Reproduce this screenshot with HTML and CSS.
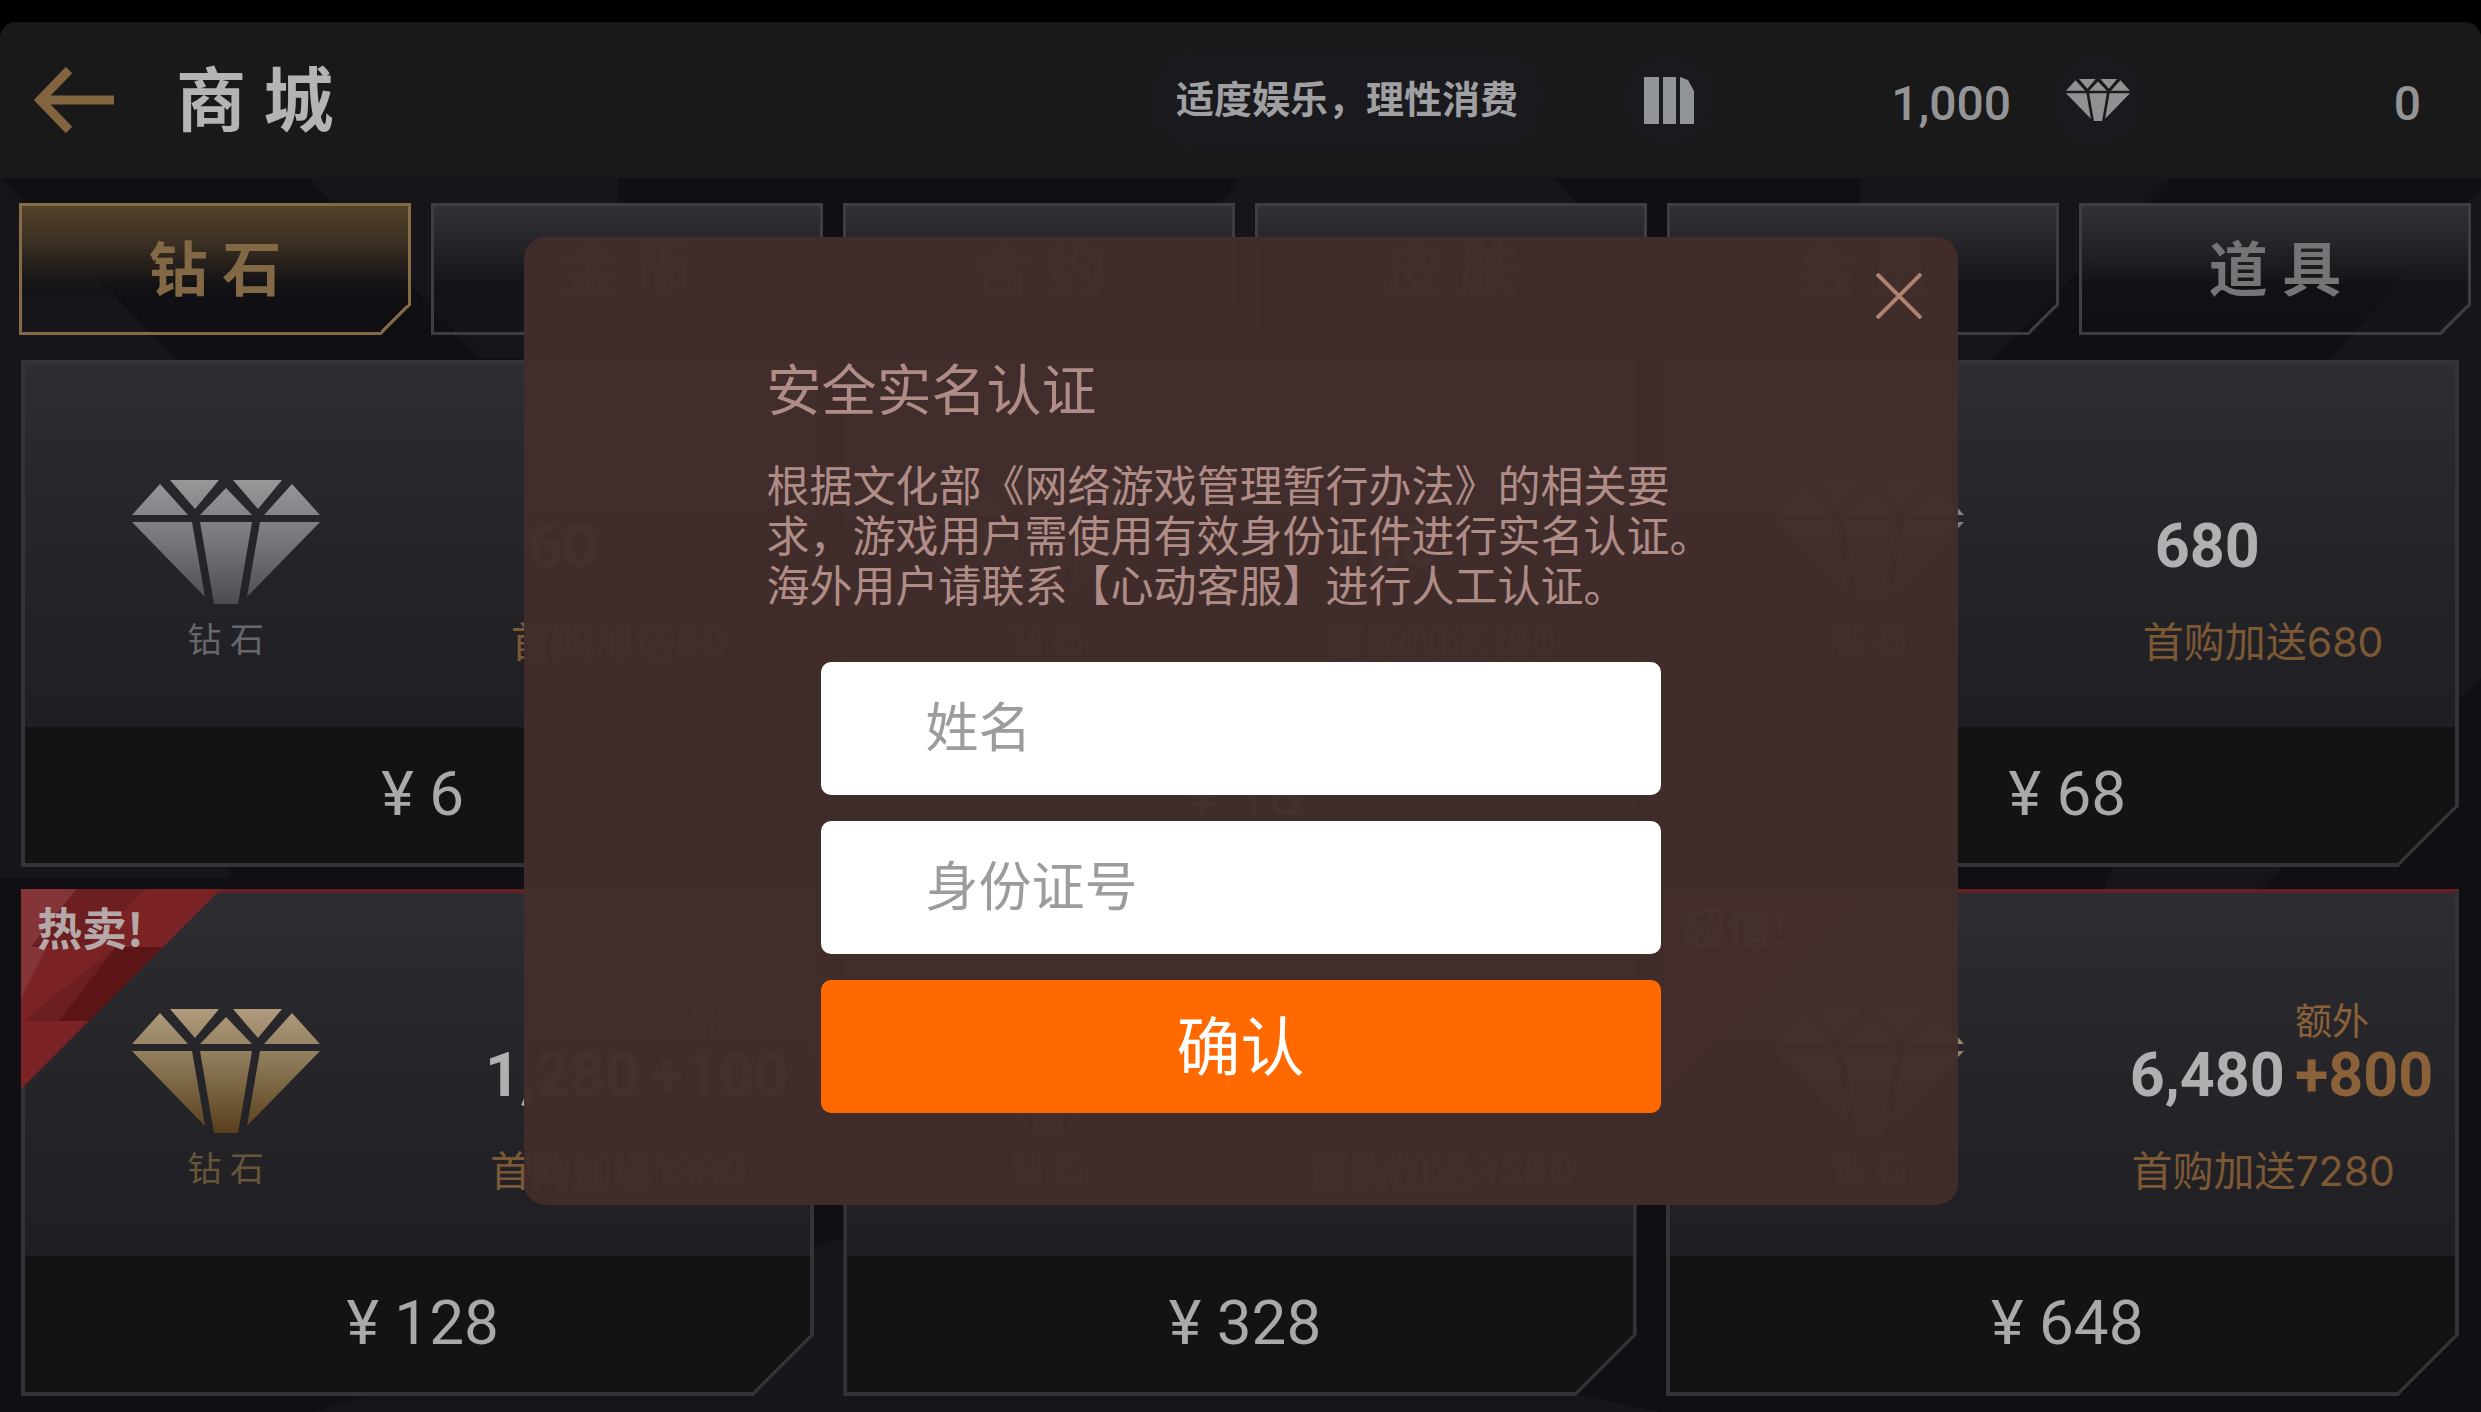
FILE: index.html
```html
<!DOCTYPE html>
<html lang="zh-CN">
<head>
<meta charset="utf-8">
<meta name="viewport" content="width=device-width, initial-scale=1">
<title>商城</title>
<link rel="stylesheet" href="styles.css">
</head>
<body>
<svg width="0" height="0" class="defs" aria-hidden="true">
  <defs>
    <linearGradient id="silver" x1="0" y1="0" x2="0" y2="124" gradientUnits="userSpaceOnUse"><stop offset="0" stop-color="#98989b"/><stop offset=".5" stop-color="#747679"/><stop offset="1" stop-color="#4c4c50"/></linearGradient>
    <linearGradient id="gold" x1="0" y1="0" x2="0" y2="124" gradientUnits="userSpaceOnUse"><stop offset="0" stop-color="#b09b7c"/><stop offset=".35" stop-color="#92805f"/><stop offset="1" stop-color="#5a3f1c"/></linearGradient>
    <symbol id="gem" viewBox="0 0 188 124">
      <path d="M28 4 56 35H0ZM38 0H87L63 29ZM101 0H150L126 29ZM94 8 120 35H68ZM160 4 188 35H132ZM0 42H60L73 117ZM68 42H120L106 124H82ZM128 42H188L115 117Z"/>
    </symbol>
  </defs>
</svg>
<div class="shop">
  <svg class="backdrop" viewBox="0 0 2481 1234" preserveAspectRatio="none" aria-hidden="true">
    <path d="M0 0 178 182 0 600ZM308 0H618V180L480 180ZM1240 0 1555 0 1590 40 1600 182H1100ZM1860 0H2170L1990 182H1860ZM2481 10V182H2330ZM0 182H170L230 700H0ZM2330 182H2481V500L2250 720H2100ZM315 1234 840 1060 1660 1234Z"/>
  </svg>
  <header class="topbar">
    <button class="back" type="button" aria-label="返回">
      <svg viewBox="0 0 80 66" width="80" height="66"><path d="M35 3 6 33 35 63M6 33H80" fill="none" stroke="#82643f" stroke-width="9"/></svg>
    </button>
    <h1>商 城</h1>
    <p class="notice">适度娱乐，理性消费</p>
    <span class="coin"><svg viewBox="0 0 50 47" width="50" height="47"><path d="M0 0H15V47H0ZM19 0H32V47H19ZM36 0 44 3 50 14V47H36Z" fill="#919499"/></svg></span>
    <span class="balance">1,000</span>
    <span class="coin"><svg width="64" height="44" fill="#919194"><use href="#gem"/></svg></span>
    <span class="balance last">0</span>
  </header>

  <nav class="tabs">
    <button class="tab active" type="button">钻 石</button>
    <button class="tab" type="button">金 币</button>
    <button class="tab" type="button">合 约</button>
    <button class="tab" type="button">皮 肤</button>
    <button class="tab" type="button">会 员</button>
    <button class="tab" type="button">道 具</button>
  </nav>

  <main class="goods">
    <article class="card">
      <div class="info">
        <div class="item"><svg class="gem" fill="url(#silver)"><use href="#gem"/></svg><span>钻 石</span></div>
        <strong class="amount">60</strong>
        <p class="bonus">首购加送60</p>
      </div>
      <div class="price">¥ 6</div>
    </article>
    <article class="card">
      <div class="info">
        <div class="item"><svg class="gem" fill="url(#silver)"><use href="#gem"/></svg><span>钻 石</span></div>
        <strong class="amount">180</strong>
        <p class="bonus">首购加送180</p>
      </div>
      <div class="price">¥ 18</div>
    </article>
    <article class="card">
      <div class="info">
        <div class="item"><svg class="gem" fill="url(#silver)"><use href="#gem"/></svg><span>钻 石</span></div>
        <strong class="amount">680</strong>
        <p class="bonus">首购加送680</p>
      </div>
      <div class="price">¥ 68</div>
    </article>
    <article class="card hot">
      <div class="ribbon">
        <svg viewBox="0 0 200 200" aria-hidden="true"><path fill="#7a2224" d="M0 0H200L0 200Z"/><path fill="#853537" d="M0 0H55L0 110Z"/><path fill="#6c1e21" d="M55 0H125L65 58H10ZM95 58H142L68 132H2Z"/><path fill="#5c1517" d="M95 58H142L68 132H38Z"/></svg>
        <b>热卖!</b>
      </div>
      <div class="info">
        <div class="item"><svg class="gem" fill="url(#gold)"><use href="#gem"/></svg><span>钻 石</span></div>
        <strong class="amount">1,280</strong>
        <div class="extra"><small>额外</small><strong>+100</strong></div>
        <p class="bonus">首购加送1380</p>
      </div>
      <div class="price">¥ 128</div>
    </article>
    <article class="card">
      <div class="info">
        <div class="item"><svg class="gem" fill="url(#gold)"><use href="#gem"/></svg><span>钻 石</span></div>
        <strong class="amount">3,280</strong>
        <div class="extra"><small>额外</small><strong>+300</strong></div>
        <p class="bonus">首购加送3580</p>
      </div>
      <div class="price">¥ 328</div>
    </article>
    <article class="card hot">
      <div class="ribbon">
        <svg viewBox="0 0 200 200" aria-hidden="true"><path fill="#7a2224" d="M0 0H200L0 200Z"/></svg>
        <b>超值!</b>
      </div>
      <div class="info">
        <div class="item"><svg class="gem" fill="url(#gold)"><use href="#gem"/></svg><span>钻 石</span></div>
        <strong class="amount">6,480</strong>
        <div class="extra"><small>额外</small><strong>+800</strong></div>
        <p class="bonus">首购加送7280</p>
      </div>
      <div class="price">¥ 648</div>
    </article>
  </main>
</div>

<div class="overlay">
  <section class="dialog" role="dialog" aria-modal="true" aria-labelledby="dialog-title">
    <button class="close" type="button" aria-label="关闭">
      <svg viewBox="0 0 46 46" width="46" height="46"><path d="M1 1 45 45M45 1 1 45" stroke="#b08270" stroke-width="4"/></svg>
    </button>
    <h2 id="dialog-title">安全实名认证</h2>
    <p class="rule">根据文化部《网络游戏管理暂行办法》的相关要<br>求，游戏用户需使用有效身份证件进行实名认证。<br>海外用户请联系【心动客服】进行人工认证。</p>
    <form class="fields">
      <input type="text" name="name" placeholder="姓名" aria-label="姓名">
      <input type="text" name="id-number" placeholder="身份证号" aria-label="身份证号">
      <button type="button">确认</button>
    </form>
  </section>
</div>
</body>
</html>
```
FILE: styles.css
```css
* { box-sizing: border-box; }

body {
  margin: 0;
  min-height: 100vh;
  padding-top: 22px;
  background: #000;
  color: #a9a9ab;
  font-family: Roboto, "Noto Sans CJK SC", sans-serif;
}

h1, h2, p { margin: 0; }
button, input { font: inherit; border: 0; padding: 0; }
button { cursor: pointer; background: none; }
svg { display: block; }
.defs { position: absolute; }

.shop {
  position: relative;
  z-index: 0;
  min-height: calc(100vh - 22px);
  background: #0f0f14;
  border-radius: 16px 16px 0 0;
  overflow: hidden;
}

.backdrop {
  position: absolute;
  z-index: -1;
  inset: 156px 0 0;
  width: 100%;
  height: calc(100% - 156px);
  fill: #15151a;
}

/* top bar */
.topbar {
  display: flex;
  align-items: center;
  height: 156px;
  padding: 0 60px 0 34px;
  background: #191919;
}
.topbar h1 {
  margin-left: 62px;
  padding-top: 4px;
  font-size: 70px;
  line-height: 80px;
  color: #b4b4b4;
}
.notice {
  margin-left: auto;
  padding: 0 26px;
  border-radius: 48px;
  background: #1a1a1e;
  font-size: 38px;
  font-weight: 700;
  line-height: 96px;
  color: #a0a0a2;
}
.coin {
  display: flex;
  align-items: center;
  justify-content: center;
  width: 90px;
  height: 90px;
  margin-left: 80px;
  border-radius: 50%;
  background: #1a1a1e;
}
.balance {
  width: 297px;
  padding-top: 8px;
  text-align: right;
  font-size: 48px;
  font-weight: 500;
  line-height: 56px;
  color: #949496;
}
.balance + .coin { margin-left: 42px; }
.balance.last { width: 278px; }

/* category tabs */
.tabs {
  display: grid;
  grid-template-columns: repeat(6, 1fr);
  gap: 20px;
  padding: 25px 10px 0 19px;
}
.tab {
  --line: #3e3e42;
  --cut: 30px;
  height: 132px;
  padding-top: 4px;
  border: 3px solid var(--line);
  background:
    linear-gradient(135deg, transparent calc(50% - 3px), var(--line) calc(50% - 3px)) right bottom / var(--cut) var(--cut) no-repeat border-box,
    linear-gradient(#313135, #222227 35%, rgba(18, 18, 22, .6) 65%, transparent);
  clip-path: polygon(0 0, 100% 0, 100% calc(100% - var(--cut)), calc(100% - var(--cut)) 100%, 0 100%);
  color: #757578;
  font-size: 59px;
  font-weight: 700;
  line-height: 80px;
}
.tab.active {
  --line: #856a45;
  background:
    linear-gradient(135deg, transparent calc(50% - 3px), var(--line) calc(50% - 3px)) right bottom / var(--cut) var(--cut) no-repeat border-box,
    linear-gradient(#524229, #3a2f22 30%, rgba(22, 20, 20, .6) 62%, transparent 75%);
  color: #836846;
}

/* goods */
.goods {
  display: grid;
  grid-template-columns: repeat(3, 1fr);
  gap: 22px 29px;
  padding: 25px 22px 15px 21px;
}
.card {
  --line: #333338;
  --cut: 61px;
  position: relative;
  display: grid;
  grid-template-rows: 363px 136px;
  background: linear-gradient(135deg, #131313 calc(50% - 3px), var(--line) calc(50% - 3px)) right bottom / var(--cut) var(--cut) no-repeat border-box, #131313;
  border: 4px solid var(--line);
  clip-path: polygon(0 0, 100% 0, 100% calc(100% - var(--cut)), calc(100% - var(--cut)) 100%, 0 100%);
}
.card.hot { border-top-color: #652023; }
.info {
  display: grid;
  grid-template-columns: 402fr 48fr 176fr 160fr;
  grid-template-rows: 245px 64px;
  background: linear-gradient(#2e2d32, #28282c 30%, #1f1f23);
}
.item {
  grid-area: 1 / 1 / 3 / 2;
  display: flex;
  flex-direction: column;
  align-items: center;
  gap: 14px;
  padding-top: 116px;
  font-size: 34px;
  line-height: 44px;
  color: #68686c;
}
.gem { width: 188px; height: 124px; }
.amount {
  grid-area: 1 / 3;
  justify-self: center;
  align-self: end;
  font-size: 61px;
  line-height: 70px;
  margin-bottom: 28px;
  color: #b0b0b2;
}
.extra {
  grid-area: 1 / 4;
  align-self: end;
  margin-bottom: 28px;
  color: #8a6139;
  white-space: nowrap;
}
.extra small {
  display: block;
  font-size: 37px;
  line-height: 34px;
}
.extra strong {
  display: block;
  font-size: 61px;
  line-height: 70px;
}
.bonus {
  grid-area: 2 / 2 / 3 / 5;
  text-align: center;
  font-family: Inter, "Noto Sans CJK SC", sans-serif;
  font-size: 41px;
  line-height: 66px;
  color: #7c5835;
}
.card:nth-child(n + 4) .item { color: #675639; }
.price {
  padding-left: 10px;
  text-align: center;
  font-size: 62px;
  line-height: 134px;
  color: #a9a9ab;
}
.ribbon {
  position: absolute;
  top: -4px;
  left: -4px;
}
.ribbon svg { width: 200px; height: 200px; }
.ribbon b {
  position: absolute;
  top: 14px;
  left: 16px;
  font-family: "Noto Sans CJK SC", sans-serif;
  font-size: 45px;
  line-height: 48px;
  color: #b5a8a8;
  white-space: nowrap;
}

/* identity dialog */
.overlay {
  position: absolute;
  inset: 0;
  display: flex;
  align-items: center;
  justify-content: center;
  padding-top: 30px;
}
.dialog {
  position: relative;
  width: 1434px;
  max-width: 96%;
  padding: 114px 0 92px;
  border-radius: 22px;
  background: rgba(65, 46, 44, .98);
  color: #b08c87;
}
.dialog h2 {
  margin-left: 243px;
  font-size: 55px;
  font-weight: 400;
  line-height: 80px;
}
.rule {
  margin: 31px 0 50px 243px;
  font-size: 43px;
  line-height: 50px;
  white-space: nowrap;
}
.close {
  position: absolute;
  top: 36px;
  right: 36px;
}
.fields {
  display: flex;
  flex-direction: column;
  gap: 26px;
  width: 840px;
  margin: 0 auto;
}
.fields input,
.fields button {
  height: 133px;
  border-radius: 10px;
}
.fields input {
  padding: 0 105px;
  background: #fff;
  color: #333;
  font-size: 53px;
}
.fields input::placeholder { color: #9c9c9c; opacity: 1; }
.fields button {
  padding-bottom: 10px;
  background: #ff6900;
  color: #fff;
  font-size: 64px;
}
```
